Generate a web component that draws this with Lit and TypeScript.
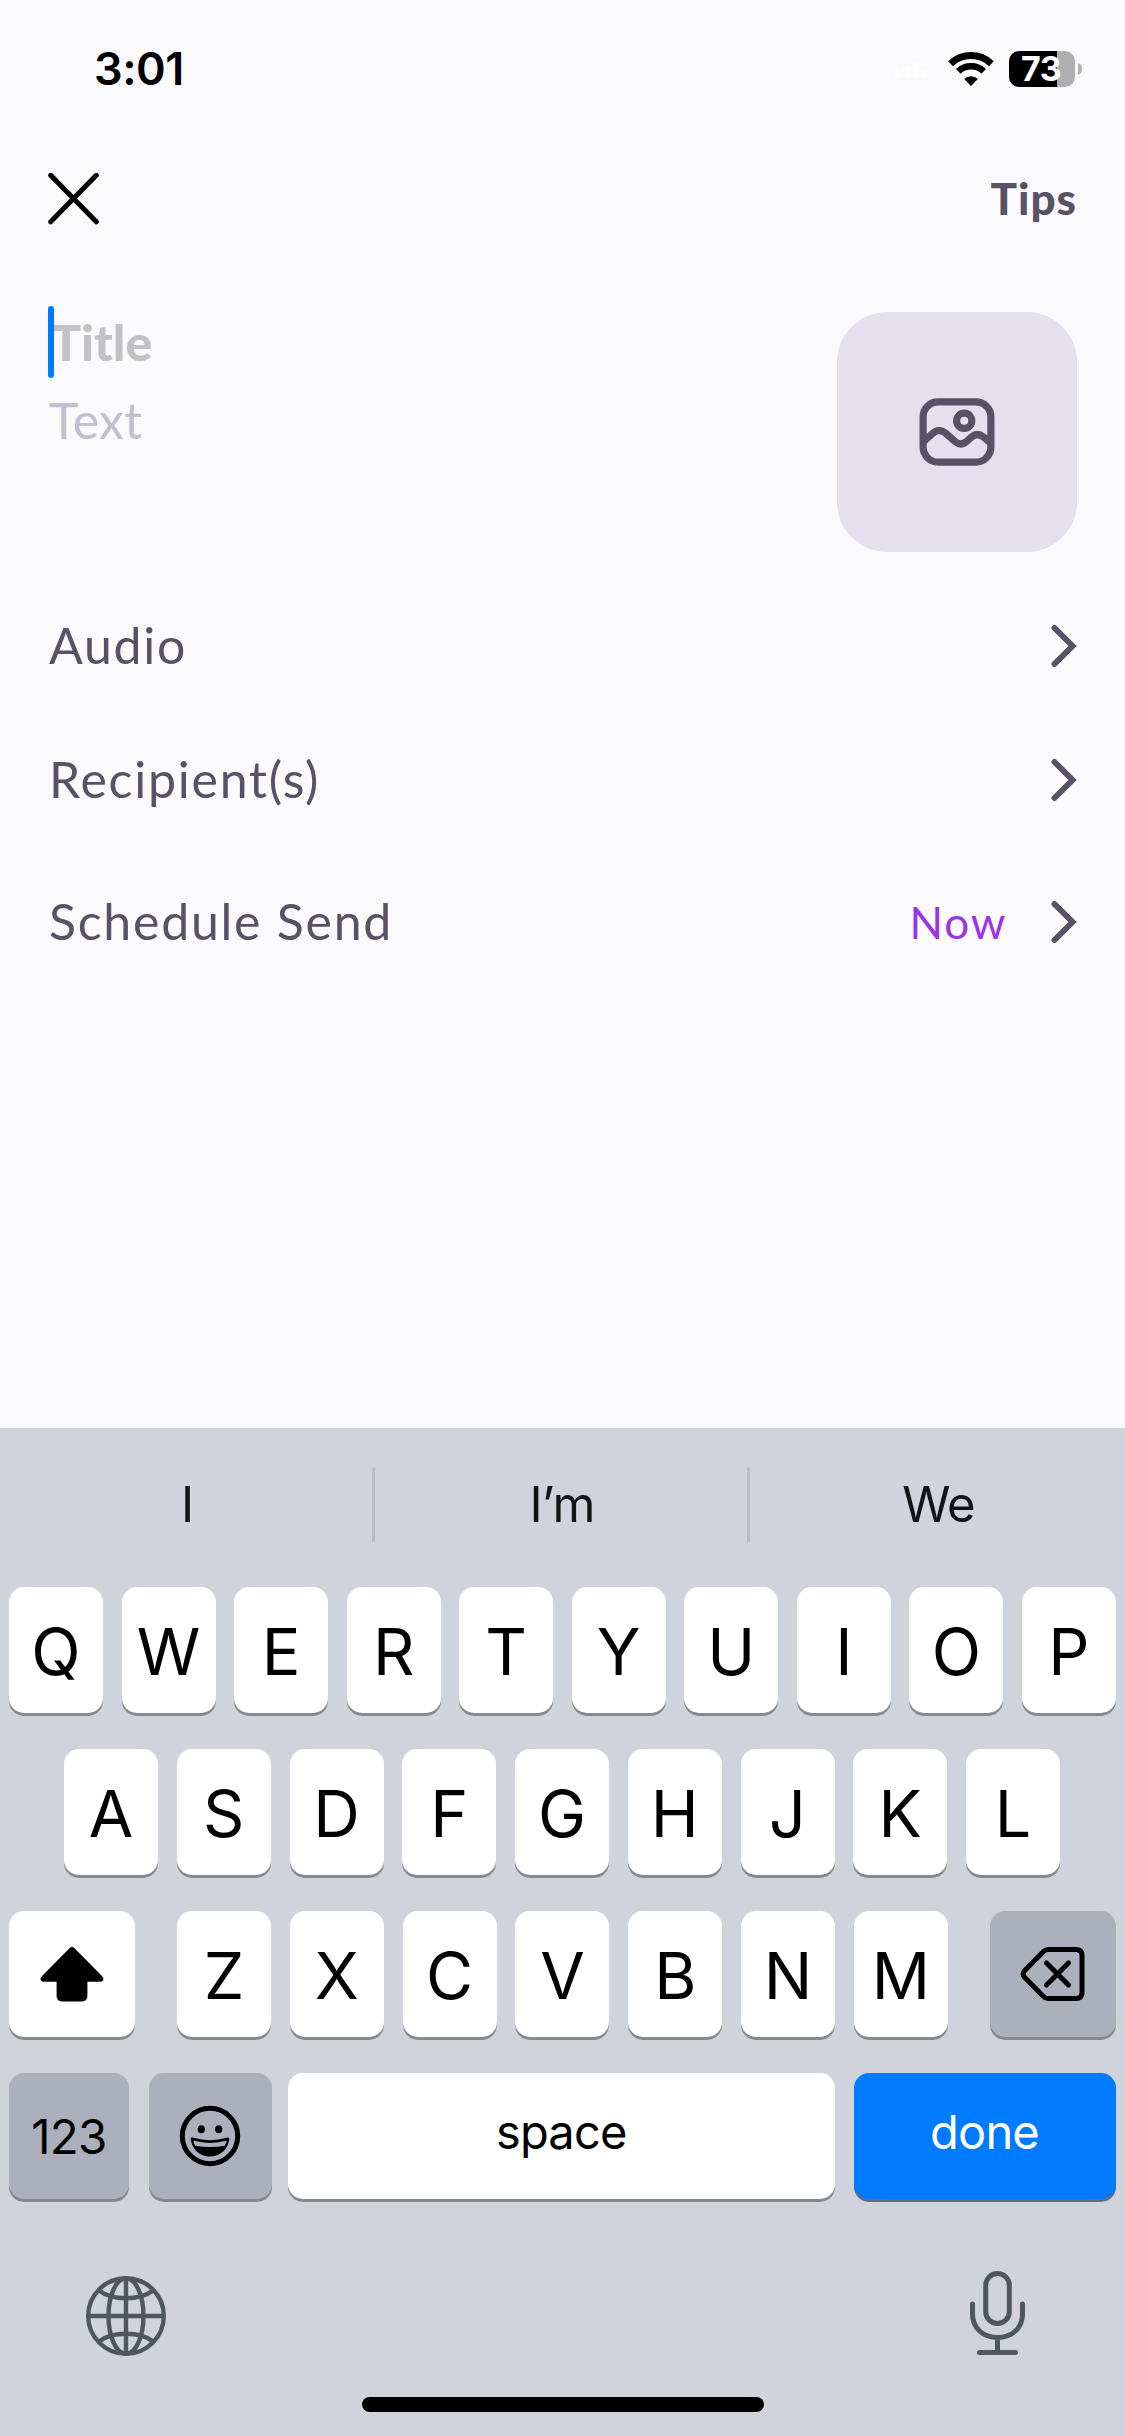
import { LitElement, html, css, nothing } from "lit";
import { customElement, property } from "lit/decorators.js";

const chevron = html`<svg class="chevron" width="26" height="44" viewBox="0 0 26 44">
  <path d="M3.500 4 L21.500 22 L3.500 40" fill="none" stroke="currentColor" stroke-width="6" stroke-linecap="round" />
</svg>`;

const shiftIcon = html`<svg width="64" height="56" viewBox="0 0 64 56">
  <path
    d="M29.200 2.400 Q32 -0.400 34.800 2.400 L62.200 30.200 Q64.400 33 62.800 34.800 Q62 35.800 60 35.800 H47.400 V50 Q47.400 55.400 42 55.400 H22 Q16.600 55.400 16.600 50 V35.800 H4 Q2 35.800 1.200 34.800 Q-0.400 33 1.800 30.200 Z"
    fill="#000"
  />
</svg>`;

const deleteIcon = html`<svg width="66" height="56" viewBox="0 0 66 56">
  <g fill="none" stroke="#000" stroke-width="5" stroke-linecap="round" stroke-linejoin="round">
    <path d="M28 3.500 H56 Q62 3.500 62 9.500 V46.500 Q62 52.500 56 52.500 H28 Q25.500 52.500 23.500 50.500 L4.800 31.500 Q1.600 28 4.800 24.500 L23.500 5.500 Q25.500 3.500 28 3.500 Z" />
    <path d="M26.500 17 L48.500 39 M48.500 17 L26.500 39" />
  </g>
</svg>`;

const emojiIcon = html`<svg width="62" height="62" viewBox="0 0 62 62">
  <circle cx="31" cy="31" r="27.700" fill="none" stroke="#000" stroke-width="5" />
  <ellipse cx="22.300" cy="24.300" rx="3.600" ry="4" />
  <ellipse cx="39.700" cy="24.300" rx="3.600" ry="4" />
  <path
    d="M11.700 34 Q11.700 32 14.500 32.800 Q31 37.600 47.500 32.800 Q50.300 32 50.300 34 C49 44.500 41 51.500 31 51.500 C21 51.500 13 44.500 11.700 34 Z"
  />
  <path d="M14.300 35.500 Q31 40.400 47.700 35.500 Q47 38.500 45.800 40.800 Q31 43.300 16.200 40.800 Q15 38.500 14.300 35.500 Z" fill="#abb0bc" />
</svg>`;

@customElement("status-bar")
export class StatusBar extends LitElement {
  static styles = css`
    :host {
      display: flex;
      align-items: center;
      justify-content: space-between;
      height: 137px;
      padding: 0 43px 0 94px;
      box-sizing: border-box;
    }
    .time {
      font: 600 45px/54px Inter, "Liberation Sans", sans-serif;
      letter-spacing: -0.500px;
      color: #000;
    }
    .indicators {
      display: flex;
      align-items: center;
    }
    .signal {
      margin-right: 18px;
      opacity: 0.6;
    }
    .wifi {
      margin-right: 15px;
    }
    .cell {
      display: flex;
      align-items: center;
      justify-content: center;
      width: 66px;
      height: 36px;
      border-radius: 10px;
      background: linear-gradient(to right, #000 48px, #afafb1 48px);
      font: 700 34px/36px Inter, "Liberation Sans", sans-serif;
      letter-spacing: -0.500px;
      text-indent: -2px;
      color: #fff;
    }
    .nub {
      margin-left: 3px;
    }
  `;

  render() {
    return html`
      <div class="time">3:01</div>
      <div class="indicators">
        <svg class="signal" width="36" height="24" viewBox="0 0 36 24" fill="#fff">
          <rect x="0" y="14" width="7" height="7" rx="2" />
          <rect x="9" y="9" width="7" height="12" rx="2" />
          <rect x="18" y="4" width="7" height="17" rx="2" />
          <rect x="27" y="12" width="7" height="9" rx="2" />
        </svg>
        <svg class="wifi" width="46" height="34" viewBox="0 0 46 34" fill="none" stroke="#000">
          <path d="M2.600 11.700 A29.500 29.500 0 0 1 43.400 11.700" stroke-width="7" />
          <path d="M10.300 19.300 A18.500 18.500 0 0 1 35.700 19.300" stroke-width="6.600" />
          <path d="M16.200 27 A10 10 0 0 1 29.800 27 L23 34 Z" fill="#000" stroke="none" />
        </svg>
        <div class="cell">73</div>
        <svg class="nub" width="4" height="12" viewBox="0 0 4 12">
          <path d="M0 0 Q4 1.500 4 6 Q4 10.500 0 12 Z" fill="#afafb1" />
        </svg>
      </div>
    `;
  }
}

@customElement("option-row")
export class OptionRow extends LitElement {
  @property() label = "";
  @property() value = "";

  static styles = css`
    :host {
      display: flex;
      align-items: center;
      height: 134px;
      color: #595266;
      font-family: Lato, "Liberation Sans", sans-serif;
    }
    .label {
      flex: 1;
      margin-top: -2px;
      padding-left: 1px;
      font-size: 50px;
      line-height: 60px;
      letter-spacing: 1.750px;
    }
    .value {
      margin-right: 44px;
      font-size: 44px;
      line-height: 54px;
      letter-spacing: 1.800px;
      color: #9a35e6;
    }
    .chevron {
      display: block;
    }
  `;

  render() {
    return html`
      <span class="label">${this.label}</span>
      ${this.value ? html`<span class="value">${this.value}</span>` : nothing} ${chevron}
    `;
  }
}

@customElement("compose-form")
export class ComposeForm extends LitElement {
  static styles = css`
    :host {
      display: block;
      padding: 0 48px;
      font-family: Lato, "Liberation Sans", sans-serif;
      color: #595266;
    }
    .header {
      display: flex;
      align-items: center;
      justify-content: space-between;
      height: 123px;
    }
    .tips {
      font-size: 44px;
      font-weight: 900;
      line-height: 54px;
      letter-spacing: 1px;
      margin-top: -2px;
    }
    .compose {
      display: flex;
      justify-content: space-between;
      padding-top: 46px;
      margin-bottom: 27px;
    }
    .title {
      display: flex;
      height: 72px;
      font-size: 50px;
      font-weight: 900;
      line-height: 72px;
      color: #c2c2c4;
    }
    .caret {
      width: 6px;
      margin-right: -3px;
      border-radius: 3px;
      background: #007aff;
      position: relative;
      z-index: 1;
    }
    .body {
      margin-top: 12px;
      padding-left: 1px;
      font-size: 50px;
      line-height: 60px;
      letter-spacing: 0.300px;
      color: #c3bfce;
    }
    .picture {
      display: grid;
      place-items: center;
      width: 240px;
      height: 240px;
      margin-top: 6px;
      border-radius: 50px;
      background: #e4e0ed;
    }
    .later {
      margin-top: 8px;
    }
  `;

  render() {
    return html`
      <div class="header">
        <svg width="51" height="52" viewBox="0 0 51 52">
          <path d="M2.700 2.200 L48.300 48.800 M48.300 2.200 L2.700 48.800" stroke="#000" stroke-width="5" stroke-linecap="round" />
        </svg>
        <span class="tips">Tips</span>
      </div>
      <div class="compose">
        <div class="fields">
          <div class="title"><span class="caret"></span><span>Title</span></div>
          <div class="body">Text</div>
        </div>
        <div class="picture">
          <svg width="76" height="68" viewBox="0 0 76 68" fill="none" stroke="#595266" stroke-width="7.200">
            <rect x="4.100" y="3.900" width="67.800" height="60.200" rx="15" />
            <circle cx="45.200" cy="22.800" r="7.600" />
            <path d="M5 43 L14.500 34.800 Q20.500 30 26.500 35 L36 43.500 Q42 48.500 47.500 43.500 L52.500 39 Q58.500 34 64.500 39 L71 44.500" />
          </svg>
        </div>
      </div>
      <option-row label="Audio"></option-row>
      <option-row label="Recipient(s)"></option-row>
      <option-row class="later" label="Schedule Send" value="Now"></option-row>
    `;
  }
}

@customElement("soft-keyboard")
export class SoftKeyboard extends LitElement {
  static styles = css`
    :host {
      display: flex;
      flex-direction: column;
      height: 1008px;
      background: #d0d3dc;
      color: #000;
      font-family: Inter, "Liberation Sans", sans-serif;
    }
    .suggestions {
      display: grid;
      grid-template-columns: 372px 3px 372px 3px 375px;
      align-items: center;
      height: 81px;
      padding: 36px 0 42px;
      text-align: center;
      font-size: 49px;
      line-height: 60px;
      letter-spacing: -1px;
      color: #101417;
    }
    .word {
      padding: 1px 0 0 2px;
    }
    .divider {
      height: 75px;
      border-radius: 2px;
      background: #babdc5;
    }
    .rows {
      display: flex;
      flex-direction: column;
      gap: 36px;
      padding: 0 9px;
    }
    .row {
      display: flex;
      justify-content: space-between;
      height: 126px;
    }
    .home-row {
      padding: 0 56px 0 55px;
    }
    .function-row {
      justify-content: flex-start;
    }
    .letters {
      display: flex;
      justify-content: space-between;
      width: 771px;
    }
    .key {
      display: flex;
      align-items: center;
      justify-content: center;
      box-sizing: border-box;
      width: 94px;
      height: 126px;
      padding-top: 3px;
      border-radius: 15px;
      background: #fff;
      box-shadow: 0 3px 0 #88898d;
      font-size: 64.500px;
    }
    .shift,
    .delete {
      width: 126px;
      padding-top: 0;
    }
    .muted {
      background: #abb0bc;
    }
    .numbers {
      width: 120px;
      padding-top: 0;
      font-size: 47.500px;
      letter-spacing: -0.700px;
    }
    .emoji {
      width: 123px;
      margin-left: 19.500px;
      padding-top: 0;
    }
    .space,
    .done {
      padding-top: 0;
      padding-bottom: 9px;
      font-size: 47px;
      letter-spacing: -0.800px;
    }
    .space {
      width: 546.500px;
      margin: 0 19px 0 16.500px;
    }
    .done {
      width: 262px;
      background: #007aff;
      color: #fff;
      box-shadow: 0 3px 0 #666e7a;
    }
    .bottom {
      display: flex;
      justify-content: space-between;
      padding: 71px 98px 0 85px;
      height: 127px;
    }
    .globe {
      margin-top: 5px;
    }
    .home-indicator {
      align-self: center;
      width: 402px;
      height: 15px;
      border-radius: 8px;
      background: #000;
    }
  `;

  private keys(letters: string) {
    return [...letters].map((letter) => html`<div class="key">${letter}</div>`);
  }

  render() {
    return html`
      <div class="suggestions">
        <span class="word">I</span><span class="divider"></span><span class="word">I’m</span><span class="divider"></span
        ><span class="word">We</span>
      </div>
      <div class="rows">
        <div class="row">${this.keys("QWERTYUIOP")}</div>
        <div class="row home-row">${this.keys("ASDFGHJKL")}</div>
        <div class="row">
          <div class="key shift">${shiftIcon}</div>
          <div class="letters">${this.keys("ZXCVBNM")}</div>
          <div class="key muted delete">${deleteIcon}</div>
        </div>
        <div class="row function-row">
          <div class="key muted numbers">123</div>
          <div class="key muted emoji">${emojiIcon}</div>
          <div class="key space">space</div>
          <div class="key done">done</div>
        </div>
      </div>
      <div class="bottom">
        <svg class="globe" width="82" height="82" viewBox="0 0 82 82" fill="none" stroke="#50565f" stroke-width="4.400">
          <circle cx="41" cy="41" r="37.800" />
          <ellipse cx="41" cy="41" rx="17.500" ry="37.800" />
          <path d="M41 3 V79 M3 41 H79 M14 15.500 Q24 23.200 41 23.200 Q58 23.200 68 15.500 M14 66.500 Q24 58.800 41 58.800 Q58 58.800 68 66.500" />
        </svg>
        <svg width="58" height="86" viewBox="0 0 58 86" fill="none" stroke="#50565f" stroke-width="5" stroke-linecap="round">
          <rect x="16.700" y="3.500" width="23.600" height="50" rx="11.800" />
          <path d="M3.500 34 V44 C3.500 58 14 67.500 28.500 67.500 C43 67.500 53.500 58 53.500 44 V34 M28.500 68 V82 M10.500 82.500 H46.500" />
        </svg>
      </div>
      <div class="home-indicator"></div>
    `;
  }
}

@customElement("app-root")
export class AppRoot extends LitElement {
  static styles = css`
    :host {
      display: flex;
      flex-direction: column;
      width: 1125px;
      height: 2436px;
      overflow: hidden;
      background: #fafafc;
    }
    .form {
      flex: 1;
    }
  `;

  render() {
    return html`
      <status-bar></status-bar>
      <compose-form class="form"></compose-form>
      <soft-keyboard></soft-keyboard>
    `;
  }
}
